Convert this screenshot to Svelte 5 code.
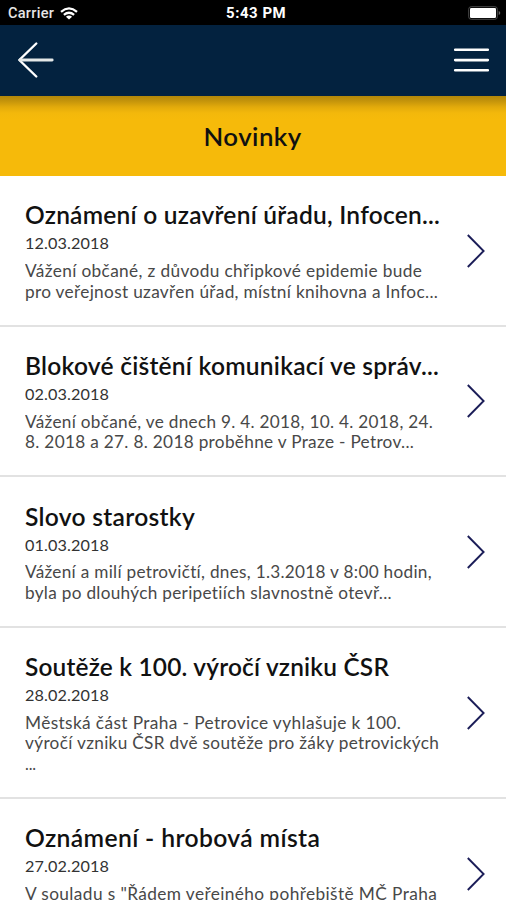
<script>
  // Each line carries the width it should occupy in the column.
  const news = [
    {
      title: ['Oznámení o uzavření úřadu, Infocen...', 415],
      date: '12.03.2018',
      body: [
        ['Vážení občané, z důvodu chřipkové epidemie bude', 397],
        ['pro veřejnost uzavřen úřad, místní knihovna a Infoc...', 413]
      ]
    },
    {
      title: ['Blokové čištění komunikací ve správ...', 414],
      date: '02.03.2018',
      body: [
        ['Vážení občané, ve dnech 9. 4. 2018, 10. 4. 2018, 24.', 408],
        ['8. 2018 a 27. 8. 2018 proběhne v Praze - Petrov...', 389]
      ]
    },
    {
      title: ['Slovo starostky', 170],
      date: '01.03.2018',
      body: [
        ['Vážení a milí petrovičtí, dnes, 1.3.2018 v 8:00 hodin,', 407],
        ['byla po dlouhých peripetiích slavnostně otevř...', 367]
      ]
    },
    {
      title: ['Soutěže k 100. výročí vzniku ČSR', 364],
      date: '28.02.2018',
      body: [
        ['Městská část Praha - Petrovice vyhlašuje k 100.', 376],
        ['výročí vzniku ČSR dvě soutěže pro žáky petrovických', 414],
        ['...', 11]
      ]
    },
    {
      title: ['Oznámení - hrobová místa', 295],
      date: '27.02.2018',
      body: [
        ['V souladu s "Řádem veřejného pohřebiště MČ Praha', 412]
      ]
    }
  ];

  // Fills the given width: half by widening the glyphs, half by tracking.
  function fit(node, width) {
    const natural = node.getBoundingClientRect().width;
    const stretch = 1 + (width / natural - 1) * 0.5;
    node.style.letterSpacing = (width / stretch - natural) / (node.textContent.length - 0.5) + 'px';
    node.style.transform = `scaleX(${stretch})`;
  }
</script>

<div class="screen">
  <div class="status">
    <div class="carrier">
      <span class="line" use:fit={46}>Carrier</span>
      <svg width="18" height="13" viewBox="0 0 18 13" fill="none" stroke="#fff" stroke-width="2.3">
        <path d="M1 4.8Q9 -2 17 4.8M3.9 7.8Q9 3.6 14.1 7.8" />
        <path d="M9 12.6L5.9 9.7Q9 7.2 12.1 9.7Z" fill="#fff" stroke="none" />
      </svg>
    </div>
    <span class="time"><span class="line" use:fit={60}>5:43 PM</span></span>
    <svg class="battery" width="33" height="14" viewBox="0 0 33 14">
      <rect x="0.7" y="0.7" width="28.6" height="12.6" rx="2.5" fill="none" stroke="#4b4b4b" />
      <rect x="2" y="2" width="26" height="10" rx="1.3" fill="#fff" />
      <path d="M30.7 5v4q1.6-.6 1.6-2t-1.6-2z" fill="#666" />
    </svg>
  </div>

  <header>
    <svg width="38" height="38" viewBox="0 0 38 38" fill="none" stroke="#fff" stroke-width="2.4" stroke-linecap="round" stroke-linejoin="round">
      <path d="M19.3 2.5L2.3 19L19.3 35.5" />
      <path d="M3 19H35.2" stroke="#e4e8e8" stroke-width="2.8" />
    </svg>
    <svg width="38" height="38" viewBox="0 0 38 38" stroke="#fff" stroke-width="2.6" stroke-linecap="round">
      <path d="M3.2 8.8H35.8M3.2 19.1H35.8M3.2 29.3H35.8" />
    </svg>
  </header>

  <h1><span class="line" use:fit={98}>Novinky</span></h1>

  <main>
    {#each news as item}
      <article>
        <div class="text">
          <h2><span class="line" use:fit={item.title[1]}>{item.title[0]}</span></h2>
          <time><span class="line" use:fit={84}>{item.date}</span></time>
          {#each item.body as line}
            <p><span class="line" use:fit={line[1]}>{line[0]}</span></p>
          {/each}
        </div>
        <svg width="20" height="36" viewBox="0 0 20 36" fill="none" stroke="#1b1d58" stroke-width="1.9">
          <path d="M1.8 2L17.6 18L1.8 34" />
        </svg>
      </article>
    {/each}
  </main>
</div>

<style>
  .screen {
    width: 506px;
    height: 900px;
    overflow: hidden;
    background: #fff;
    font-family: Lato, "Open Sans", sans-serif;
    color: #111;
    display: flex;
    flex-direction: column;
    white-space: nowrap;
  }
  .line {
    display: inline-block;
    transform-origin: left;
  }
  .status {
    flex: none;
    height: 25px;
    box-sizing: border-box;
    padding: 1px 5px 0 8px;
    background: #000;
    color: #e6e6e6;
    display: grid;
    grid-template-columns: 1fr auto 1fr;
    align-items: center;
    font: 500 14px/24px Roboto, sans-serif;
  }
  .carrier {
    display: flex;
    align-items: center;
    gap: 8px;
  }
  .time {
    color: #fff;
    font-weight: 700;
    padding-right: 1px;
  }
  .battery {
    justify-self: end;
  }
  header {
    flex: none;
    height: 71px;
    box-sizing: border-box;
    padding: 0 16px 1px 17px;
    display: flex;
    align-items: center;
    justify-content: space-between;
    background: #03223f;
  }
  h1 {
    flex: none;
    margin: 0;
    height: 80px;
    line-height: 81px;
    text-align: center;
    font-size: 25px;
    font-weight: 600;
    background: linear-gradient(#b28708, #c4940b 5px, #e2aa0b 11px, #f3b80b 17px, #f6ba0a 23px);
  }
  h1 .line {
    transform-origin: center;
  }
  h2, p {
    margin: 0;
  }
  main {
    flex: none;
  }
  article {
    box-sizing: border-box;
    min-height: 150.6px;
    padding: 23.4px 20px 22.2px 25px;
    border-bottom: 2px solid #e2e2e2;
    display: flex;
    align-items: center;
    justify-content: space-between;
  }
  .text {
    align-self: flex-start;
  }
  h2 {
    font-size: 24px;
    line-height: 31px;
    font-weight: 600;
  }
  time {
    display: block;
    font-size: 16px;
    line-height: 25.2px;
    margin-bottom: 5.4px;
    color: #333;
  }
  p {
    font-size: 16.5px;
    line-height: 20.7px;
    font-weight: 400;
    color: #484848;
  }
</style>
